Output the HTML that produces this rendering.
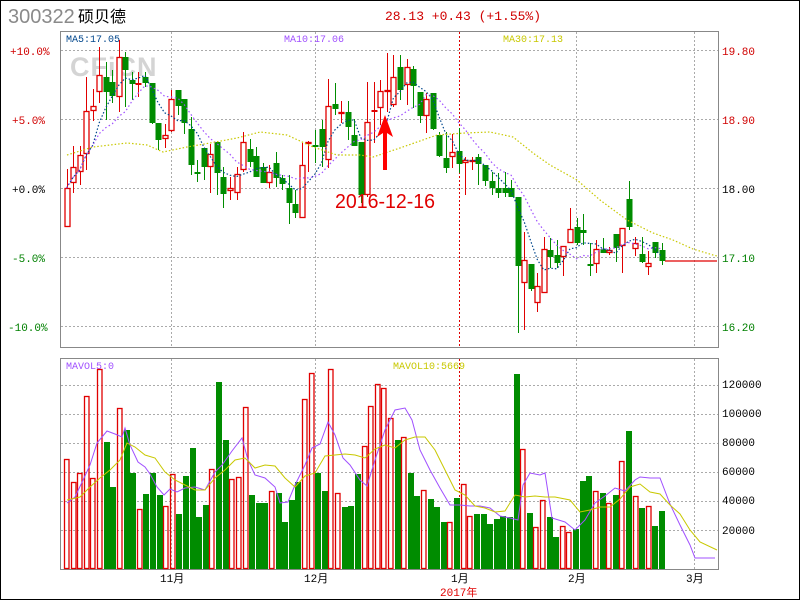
<!DOCTYPE html>
<html><head><meta charset="utf-8">
<style>
html,body{margin:0;padding:0;background:#fff;}
#w{position:relative;width:798px;height:598px;border:1px solid #000;overflow:hidden;background:#fff;}
svg{position:absolute;left:-1px;top:-1px;}
text{font-family:"Liberation Mono","Noto Sans CJK SC",monospace;}
</style></head><body>
<div id="w">
<svg id="s" width="800" height="600" xmlns="http://www.w3.org/2000/svg">
<text x="8" y="23" font-size="20" fill="#8a8a8a" style="font-family:'Liberation Sans',sans-serif">300322</text>
<text x="78" y="22" font-size="16" fill="#000" style="font-family:'Liberation Sans','Noto Sans CJK SC',sans-serif">硕贝德</text>
<text x="385" y="20" font-size="13" fill="#d00000">28.13 +0.43 (+1.55%)</text>

<rect x="60.5" y="31.5" width="658" height="316" fill="none" stroke="#888" stroke-width="1"/>
<rect x="60.5" y="358.5" width="658" height="211" fill="none" stroke="#888" stroke-width="1"/>
<g stroke="#aaa" stroke-dasharray="2,2" stroke-width="1">
<line x1="61" y1="50.5" x2="718" y2="50.5"/><line x1="61" y1="119.5" x2="718" y2="119.5"/><line x1="61" y1="188.5" x2="718" y2="188.5"/><line x1="61" y1="257.5" x2="718" y2="257.5"/><line x1="61" y1="326.5" x2="718" y2="326.5"/>
<line x1="171.5" y1="32" x2="171.5" y2="347"/><line x1="315.5" y1="32" x2="315.5" y2="347"/><line x1="576.5" y1="32" x2="576.5" y2="347"/><line x1="694.5" y1="32" x2="694.5" y2="347"/>
<line x1="171.5" y1="359" x2="171.5" y2="569"/><line x1="315.5" y1="359" x2="315.5" y2="569"/><line x1="576.5" y1="359" x2="576.5" y2="569"/><line x1="694.5" y1="359" x2="694.5" y2="569"/>
<line x1="61" y1="385.5" x2="718" y2="385.5"/><line x1="61" y1="414.5" x2="718" y2="414.5"/><line x1="61" y1="443.5" x2="718" y2="443.5"/><line x1="61" y1="472.5" x2="718" y2="472.5"/><line x1="61" y1="501.5" x2="718" y2="501.5"/><line x1="61" y1="530.5" x2="718" y2="530.5"/>
</g>
<g stroke="#e00000" stroke-dasharray="2,2" stroke-width="1"><line x1="459.5" y1="32" x2="459.5" y2="347"/><line x1="459.5" y1="359" x2="459.5" y2="569"/></g>

<text x="70" y="76" font-size="27" font-weight="bold" fill="#d4d4d4" style="font-family:'Liberation Sans',sans-serif" letter-spacing="1">CFiCN</text>

<g font-size="11">
<text x="10" y="55" fill="#d00000">+10.0%</text>
<text x="12" y="124" fill="#d00000">+5.0%</text>
<text x="12" y="193" fill="#000">+0.0%</text>
<text x="12" y="262" fill="#008000">-5.0%</text>
<text x="8" y="331" fill="#008000">-10.0%</text>
<text x="722" y="55" fill="#d00000">19.80</text>
<text x="722" y="124" fill="#d00000">18.90</text>
<text x="722" y="193" fill="#000">18.00</text>
<text x="722" y="262" fill="#008000">17.10</text>
<text x="722" y="331" fill="#008000">16.20</text>
<text x="722" y="388" fill="#000">120000</text>
<text x="722" y="417" fill="#000">100000</text>
<text x="722" y="446" fill="#000">80000</text>
<text x="722" y="475" fill="#000">60000</text>
<text x="722" y="504" fill="#000">40000</text>
<text x="722" y="534" fill="#000">20000</text>
</g>
<g font-size="10">
<text x="66" y="42" fill="#00468c">MA5:17.05</text>
<text x="284" y="42" fill="#a050ff">MA10:17.06</text>
<text x="503" y="42" fill="#c8c800">MA30:17.13</text>
<text x="66" y="369" fill="#a050ff">MAVOL5:0</text>
<text x="393" y="369" fill="#c8c800">MAVOL10:5669</text>
</g>
<g font-size="11" fill="#000" style="font-family:'Liberation Sans','Noto Sans CJK SC',sans-serif">
<text x="160" y="582">11月</text><text x="304" y="582">12月</text><text x="451" y="582">1月</text><text x="568" y="582">2月</text><text x="686" y="582">3月</text>
<text x="440" y="596" fill="#e00000">2017年</text>
</g>
<g id="c"></g>
<polyline fill="none" stroke="#c8c800" stroke-width="1.2" stroke-dasharray="1.5,2" points="67,155 93,147 127,143 147,145 163,152 187,147 210,143 237,138 260,132 287,135 313,147 337,155 360,155 373,157 400,148 437,135 465,133 490,132 513,137 533,153 550,165 577,180 600,200 627,220 653,233 673,240 693,249 713,255 717,256"/>
<polyline fill="none" stroke="#a050ff" stroke-width="1" points="67,503 75,497 84,478 90,465 97,443 107,431 115,434 122,437 125,428 130,445 138,462 145,467 150,474 157,487 164,495 170,489 177,492 185,488 195,487 205,490 215,472 222,465 232,451 242,438 248,460 255,475 265,478 275,487 280,503 288,502 295,485 305,465 312,448 320,444 328,422 335,435 343,458 350,465 360,480 367,486 375,460 385,430 395,410 405,408 412,420 420,450 430,470 440,488 450,505 460,505 470,506 480,506 490,508 500,516 510,518 518,520 523,485 530,473 540,475 545,473 552,518 565,522 575,530 585,520 595,503 605,496 615,488 625,491 635,480 640,477 650,478 660,478 670,504 680,525 690,545 695,558 715,558"/>
<polyline fill="none" stroke="#c8c800" stroke-width="1" points="67,500 80,497 90,487 100,478 110,470 120,460 127,443 135,447 145,455 155,458 165,472 175,480 185,485 195,490 205,490 215,478 225,470 235,460 245,458 255,468 265,465 275,466 285,478 295,487 305,476 315,473 325,456 335,455 345,454 355,455 365,458 375,449 385,445 395,448 405,440 415,437 425,437 435,450 445,470 455,490 465,495 475,506 485,508 495,512 505,511 515,495 525,497 535,496 545,497 555,497 570,500 580,512 590,510 600,507 610,507 620,499 630,487 640,484 650,492 660,494 670,505 680,514 690,530 700,542 717,550"/>
<text x="335" y="208" font-size="20" fill="#e00000" textLength="100" lengthAdjust="spacingAndGlyphs" style="font-family:'Liberation Sans',sans-serif">2016-12-16</text>
<polygon points="385,115 393,137 387,133 387,170 383,170 383,133 377,137" fill="#ff0000"/>
</svg>
</div>
<script>
var C="r,188,227,169,227|r,167,183,146,193|r,155,172,146,185|r,111,154,77,170|r,106,111,89,121|r,75,92,47,103|g,77,92,62,120|g,82,96,70,103|r,57,97,40,112|g,57,70,52,107|g,80,84,72,100|r,83,84,72,97|g,77,83,72,87|g,83,123,83,124|g,123,140,123,150|r,135,139,124,148|r,99,131,90,132|g,90,106,90,115|g,99,123,99,134|g,129,165,117,175|g,172,174,160,182|g,148,167,148,180|r,154,167,144,193|g,142,173,142,195|g,177,194,167,208|r,188,191,177,200|r,174,193,167,200|r,142,170,132,172|g,149,162,139,167|g,156,177,147,177|g,167,183,163,183|r,172,183,165,188|g,163,178,152,187|g,178,184,175,190|g,188,203,175,224|g,204,213,190,218|r,165,218,143,218|r,142,144,141,172|g,145,147,130,163|g,129,147,120,167|r,106,160,79,168|g,104,109,83,115|r,112,114,101,123|g,112,127,101,140|g,135,146,119,146|g,142,195,142,203|r,122,195,82,197|r,110,111,82,143|r,91,108,80,125|r,90,92,53,112|r,77,105,55,107|g,67,90,55,100|r,67,85,59,105|g,69,86,66,108|g,92,116,92,123|r,99,116,93,133|g,93,129,93,130|g,135,156,132,157|g,158,168,132,173|r,152,157,134,168|g,151,164,128,173|r,160,163,157,195|r,160,162,157,170|g,157,164,154,185|g,165,181,165,186|g,181,188,172,195|g,188,193,173,198|g,188,193,172,197|g,188,197,180,197|g,197,266,197,333|r,260,283,232,330|g,264,289,264,291|r,286,303,273,312|r,249,293,237,293|g,250,257,238,268|g,255,263,240,268|r,246,257,246,276|r,229,243,208,243|g,227,243,218,245|g,230,233,214,245|g,264,266,243,276|r,249,264,240,273|g,249,253,238,253|r,250,253,247,255|g,234,248,234,262|r,228,246,228,273|g,199,227,181,230|r,243,249,237,256|g,254,262,237,263|r,263,267,251,275|g,242,253,242,258|g,250,261,243,265";
var V="r459|r482|r473|r396|r478|r369|g442|g487|r408|g430|g473|r509|g494|g473|g495|r506|r474|g514|g476|g448|g517|g505|r469|g382|g440|r479|r477|r407|g495|g503|g503|r491|g493|g522|g500|g482|r399|r373|g473|g491|r369|r493|g507|g506|g474|r446|r406|r384|r388|r418|g440|r437|g473|g496|r490|g499|g507|g522|r522|g498|r484|r516|g514|g514|g524|g519|g516|g517|g374|r449|g513|r527|r500|g517|g537|r526|r532|g529|g481|g476|r491|g493|r503|g495|r461|g431|r496|g508|r506|g526|g511";
var R="#e00000",G="#008c00",s="",cl=[];
var cs=C.split("|"),n=cs.length,st=595/(n-1);
cs.forEach(function(d,i){var a=d.split(","),x=66.5+i*st,t=+a[1],b=+a[2],h=+a[3],l=+a[4],col=a[0]=="r"?R:G;
 cl.push(a[0]=="r"?t:b);
 var xx=Math.round(x)+0.5;
 s+='<line x1="'+xx+'" y1="'+h+'" x2="'+xx+'" y2="'+l+'" stroke="'+col+'"/>';
 if(b-t<2){s+='<rect x="'+(xx-3)+'" y="'+t+'" width="6" height="2" fill="'+col+'"/>';}
 else if(a[0]=="r"){s+='<rect x="'+(xx-2.5)+'" y="'+(t+0.5)+'" width="5" height="'+(b-t-1)+'" fill="#fff" stroke="'+R+'" stroke-width="1.3"/>';}
 else{s+='<rect x="'+(xx-3)+'" y="'+t+'" width="6" height="'+(b-t)+'" fill="'+G+'"/>';}
});
s+='<line x1="665" y1="261" x2="717" y2="261" stroke="'+R+'" stroke-width="1.3"/>';
function ma(k,col,dash){var p=[];for(var i=0;i<n;i++){var sm=0,c=0;for(var j=Math.max(0,i-k+1);j<=i;j++){sm+=cl[j];c++;}p.push((66.5+i*st).toFixed(1)+","+(sm/c).toFixed(1));}
 s+='<polyline fill="none" stroke="'+col+'" stroke-width="1.2" stroke-dasharray="'+dash+'" points="'+p.join(" ")+'"/>';}
ma(5,"#00468c","1.5,2");ma(10,"#a050ff","1.5,2.5");
var vs=V.split("|"),vst=595/(vs.length-1);
vs.forEach(function(d,i){var x=Math.round(64+i*vst),t=+d.slice(1);
 if(d[0]=="r")s+='<rect x="'+(x+0.5)+'" y="'+(t+0.5)+'" width="4.5" height="'+(568-t)+'" fill="none" stroke="'+R+'" stroke-width="1.3"/>';
 else s+='<rect x="'+x+'" y="'+t+'" width="6" height="'+(569-t)+'" fill="'+G+'"/>';});
document.getElementById("c").innerHTML=s;
</script>
</body></html>
